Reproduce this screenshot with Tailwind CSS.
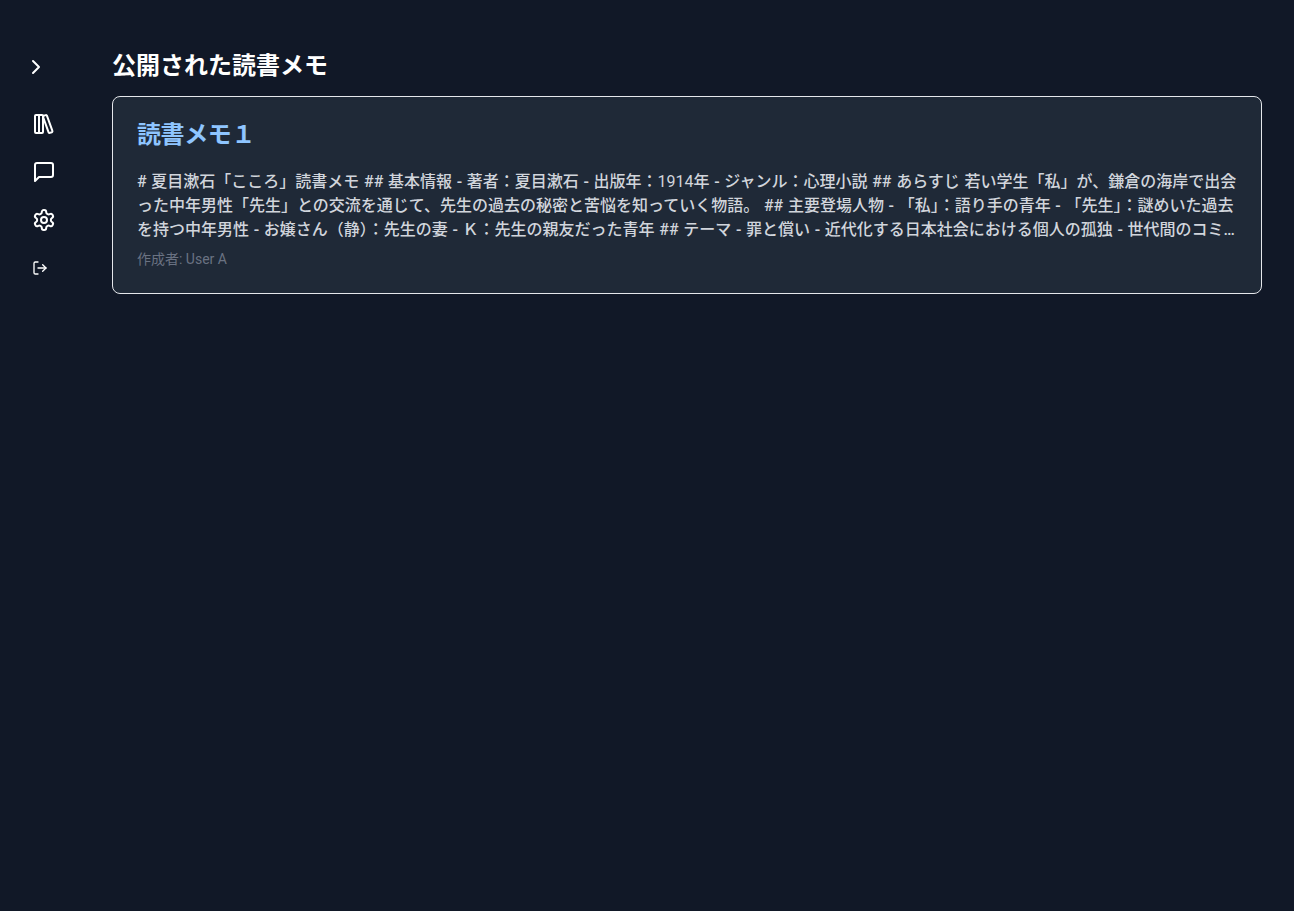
<!DOCTYPE html>
<html lang="ja">
<head>
    <meta charset="UTF-8">
    <title>公開された読書メモ</title>
    <script src="https://cdn.jsdelivr.net/npm/@tailwindcss/browser@4"></script>
</head>
<body class="bg-[#111827] min-h-screen font-['Roboto','Noto_Sans_CJK_JP',sans-serif] text-white">
    <div class="flex min-h-screen">
        <!-- sidebar -->
        <nav class="w-20 shrink-0 pt-[55px] pl-6">
            <button class="block w-6 h-6 mb-[33px] text-white">
                <svg class="w-6 h-6" viewBox="0 0 24 24" fill="none" stroke="currentColor" stroke-width="2" stroke-linecap="round" stroke-linejoin="round"><path d="m9 18 6-6-6-6"/></svg>
            </button>
            <div class="flex flex-col gap-6 pl-2">
                <svg class="w-6 h-6" viewBox="0 0 24 24" fill="none" stroke="currentColor" stroke-width="2" stroke-linecap="round" stroke-linejoin="round"><rect width="8" height="18" x="3" y="3" rx="1"/><path d="M7 3v18"/><path d="M20.4 18.9c.2.5-.1 1.1-.6 1.3l-1.9.7c-.5.2-1.1-.1-1.3-.6L11.1 5.1c-.2-.5.1-1.1.6-1.3l1.9-.7c.5-.2 1.1.1 1.3.6Z"/></svg>
                <svg class="w-6 h-6" viewBox="0 0 24 24" fill="none" stroke="currentColor" stroke-width="2" stroke-linecap="round" stroke-linejoin="round"><path d="M21 15a2 2 0 0 1-2 2H7l-4 4V5a2 2 0 0 1 2-2h14a2 2 0 0 1 2 2z"/></svg>
                <svg class="w-6 h-6" viewBox="0 0 24 24" fill="none" stroke="currentColor" stroke-width="2" stroke-linecap="round" stroke-linejoin="round"><path d="M12.22 2h-.44a2 2 0 0 0-2 2v.18a2 2 0 0 1-1 1.73l-.43.25a2 2 0 0 1-2 0l-.15-.08a2 2 0 0 0-2.73.73l-.22.38a2 2 0 0 0 .73 2.73l.15.1a2 2 0 0 1 1 1.72v.51a2 2 0 0 1-1 1.74l-.15.09a2 2 0 0 0-.73 2.73l.22.38a2 2 0 0 0 2.73.73l.15-.08a2 2 0 0 1 2 0l.43.25a2 2 0 0 1 1 1.73V20a2 2 0 0 0 2 2h.44a2 2 0 0 0 2-2v-.18a2 2 0 0 1 1-1.73l.43-.25a2 2 0 0 1 2 0l.15.08a2 2 0 0 0 2.73-.73l.22-.39a2 2 0 0 0-.73-2.73l-.15-.08a2 2 0 0 1-1-1.74v-.5a2 2 0 0 1 1-1.74l.15-.09a2 2 0 0 0 .73-2.73l-.22-.38a2 2 0 0 0-2.73-.73l-.15.08a2 2 0 0 1-2 0l-.43-.25a2 2 0 0 1-1-1.73V4a2 2 0 0 0-2-2z"/><circle cx="12" cy="12" r="3"/></svg>
                <svg class="w-4 h-4 my-1" viewBox="0 0 24 24" fill="none" stroke="currentColor" stroke-width="2" stroke-linecap="round" stroke-linejoin="round"><path d="M9 21H5a2 2 0 0 1-2-2V5a2 2 0 0 1 2-2h4"/><polyline points="16 17 21 12 16 7"/><line x1="21" y1="12" x2="9" y2="12"/></svg>
            </div>
        </nav>
        <!-- main -->
        <main class="flex-1 pt-12 pl-8 pr-8">
            <h1 class="text-2xl leading-[36px] font-bold mb-3">公開された読書メモ</h1>
            <div class="bg-[#1f2937] border border-gray-200 rounded-lg p-6">
                <h2 class="text-2xl leading-[28px] tracking-[-0.4px] font-bold text-blue-300 mb-[21px]">読書メモ１</h2>
                <p class="text-base font-medium [word-spacing:0.7px] text-gray-300 line-clamp-3"># 夏目漱石「こころ」読書メモ ## 基本情報 - 著者：夏目漱石 - 出版年：<span class="font-normal">1914</span>年 - ジャンル：心理小説 ## あらすじ 若い学生「私」が、鎌倉の海岸で出会った中年男性「先生」との交流を通じて、先生の過去の秘密と苦悩を知っていく物語。 ## 主要登場人物 - 「私」：語り手の青年 - 「先生」：謎めいた過去を持つ中年男性 - お嬢さん（静）：先生の妻 - Ｋ：先生の親友だった青年 ## テーマ - 罪と償い - 近代化する日本社会における個人の孤独 - 世代間のコミュニケーションの断絶と継承について考える</p>
                <p class="text-sm text-gray-500 mt-[7px]">作成者: User A</p>
            </div>
        </main>
    </div>
</body>
</html>
